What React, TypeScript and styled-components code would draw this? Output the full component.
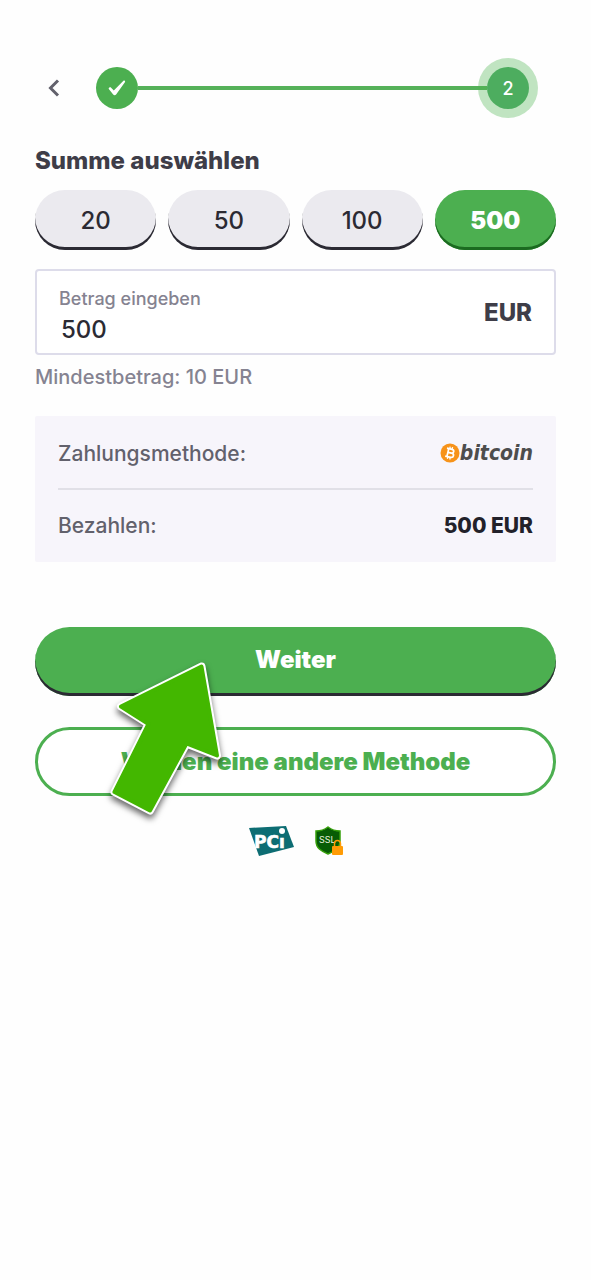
import React, { useState } from "react";
import styled, { createGlobalStyle } from "styled-components";

const GlobalStyle = createGlobalStyle`
  *, *::before, *::after { box-sizing: border-box; }
  body {
    margin: 0;
    background: #fefefe;
    color: #3e3d48;
    font-family: Inter, "Liberation Sans", sans-serif;
  }
  button, input { font-family: inherit; }
`;

const green = "#4caf50";

const Page = styled.main`
  display: flex;
  flex-direction: column;
  padding: 58px 35px 40px;
`;

const Stepper = styled.nav`
  display: flex;
  align-items: center;
  height: 60px;
  padding: 0 27px 0 7px;
`;

const BackButton = styled.button`
  display: flex;
  align-items: center;
  justify-content: center;
  width: 24px;
  height: 32px;
  margin-right: 30px;
  padding: 0;
  border: 0;
  background: none;
  cursor: pointer;
`;

const Step = styled.span<{ $current?: boolean }>`
  display: flex;
  align-items: center;
  justify-content: center;
  flex: none;
  width: 42px;
  height: 42px;
  border-radius: 50%;
  background: ${({ $current }) => ($current ? "#4dad5f" : green)};
  box-shadow: ${({ $current }) => ($current ? "0 0 0 9px rgba(76, 180, 80, 0.35)" : "none")};
  color: #fff;
  font-size: 18px;
  font-weight: 500;
`;

const StepLine = styled.span`
  flex: 1;
  height: 4px;
  background: #55b159;
`;

const Heading = styled.h1`
  margin: 28px 0 14px;
  font-size: 24px;
  line-height: 30px;
  font-weight: 800;
`;

const Amounts = styled.div`
  display: grid;
  grid-template-columns: repeat(4, 1fr);
  gap: 12px;
`;

const AmountButton = styled.button<{ $selected: boolean }>`
  height: 60px;
  padding: 0;
  border: 0;
  border-radius: 30px;
  background: ${({ $selected }) => ($selected ? green : "#ebeaef")};
  box-shadow: inset 0 -3px 0 ${({ $selected }) => ($selected ? "#1b6b20" : "#2b2a33")};
  color: ${({ $selected }) => ($selected ? "#fff" : "#2b2a33")};
  font-size: 24px;
  font-weight: ${({ $selected }) => ($selected ? 900 : 500)};
  cursor: pointer;
`;

const Field = styled.div`
  display: flex;
  align-items: center;
  justify-content: space-between;
  height: 86px;
  margin-top: 19px;
  padding: 0 22px;
  border: 2px solid #dddcea;
  border-radius: 4px;
  background: #fff;
`;

const FieldMain = styled.div`
  display: flex;
  flex: 1;
  flex-direction: column;
  min-width: 0;
  padding-top: 10px;
`;

const FieldLabel = styled.label`
  color: #858391;
  font-size: 18px;
  line-height: 24px;
  font-weight: 500;
`;

const AmountInput = styled.input`
  width: 100%;
  height: 36px;
  padding: 0 2px;
  border: 0;
  outline: 0;
  background: none;
  color: #2b2a33;
  font-size: 24px;
  font-weight: 500;
`;

const Currency = styled.span`
  font-size: 24px;
  font-weight: 800;
`;

const Hint = styled.p`
  margin: 8px 0 0;
  color: #858391;
  font-size: 20px;
  line-height: 28px;
  font-weight: 500;
`;

const Summary = styled.dl`
  margin: 25px 0 0;
  padding: 2px 23px;
  border-radius: 2px;
  background: #f7f5fb;
`;

const SummaryRow = styled.div`
  display: flex;
  align-items: center;
  justify-content: space-between;
  height: 70px;

  & + & {
    height: 72px;
    border-top: 2px solid #e1e0e7;
  }
`;

const Term = styled.dt`
  color: #62616c;
  font-size: 21px;
  font-weight: 500;
`;

const Value = styled.dd`
  display: flex;
  align-items: center;
  margin: 0;
  color: #22212a;
  font-size: 21px;
  font-weight: 800;
`;

const BitcoinName = styled.span`
  color: #4d4d4d;
  font-family: "DejaVu Sans Condensed", "DejaVu Sans", sans-serif;
  font-size: 21px;
  line-height: 26px;
  font-style: italic;
  font-weight: 700;
`;

const Actions = styled.div`
  position: relative;
  display: flex;
  flex-direction: column;
  gap: 31px;
  margin-top: 65px;
`;

const ActionButton = styled.button<{ $outline?: boolean }>`
  height: 69px;
  padding: 0 0 ${({ $outline }) => ($outline ? "0" : "4px")};
  border: ${({ $outline }) => ($outline ? `3px solid ${green}` : "0")};
  border-radius: 35px;
  background: ${({ $outline }) => ($outline ? "#fff" : green)};
  box-shadow: ${({ $outline }) => ($outline ? "none" : "inset 0 -3px 0 #2b2a33")};
  color: ${({ $outline }) => ($outline ? green : "#fff")};
  font-size: 24px;
  font-weight: 900;
  cursor: pointer;
`;

const Pointer = styled.svg`
  position: absolute;
  top: 26px;
  left: 65px;
  pointer-events: none;
  overflow: visible;
  filter: drop-shadow(0 4px 3px rgba(0, 0, 0, 0.6));
`;

const Badges = styled.footer`
  display: flex;
  align-items: center;
  justify-content: center;
  gap: 20px;
  margin-top: 29px;
`;

const presets = ["20", "50", "100", "500"];

export default function App() {
  const [amount, setAmount] = useState("500");

  return (
    <>
      <GlobalStyle />
      <Page>
        <Stepper aria-label="Schritte">
          <BackButton type="button" aria-label="Zurück">
            <svg width="12" height="18" viewBox="0 0 12 18" fill="none" stroke="#62616c" strokeWidth="3">
              <path d="M10 1.5 2.5 9l7.5 7.5" />
            </svg>
          </BackButton>
          <Step>
            <svg width="18" height="16" viewBox="0 0 18 16" fill="#fff">
              <path d="M.8 9c-.6-1 1.300-2.400 2.300-1.300l2.700 2.900L15.200 1c1.200-1.100 2.500 0 1.700 1.200L8.300 14.300c-.9 1.200-2.500 1.200-3.300 0z" />
            </svg>
          </Step>
          <StepLine />
          <Step $current>2</Step>
        </Stepper>

        <Heading>Summe auswählen</Heading>
        <Amounts>
          {presets.map((value) => (
            <AmountButton
              key={value}
              type="button"
              $selected={amount === value}
              aria-pressed={amount === value}
              onClick={() => setAmount(value)}
            >
              {value}
            </AmountButton>
          ))}
        </Amounts>

        <Field>
          <FieldMain>
            <FieldLabel htmlFor="amount">Betrag eingeben</FieldLabel>
            <AmountInput
              id="amount"
              inputMode="decimal"
              value={amount}
              onChange={(event) => setAmount(event.target.value)}
            />
          </FieldMain>
          <Currency>EUR</Currency>
        </Field>
        <Hint>Mindestbetrag: 10 EUR</Hint>

        <Summary>
          <SummaryRow>
            <Term>Zahlungsmethode:</Term>
            <Value>
              <svg width="20" height="20" viewBox="0 0 20 20">
                <circle cx="10" cy="10" r="9.5" fill="#f7931a" />
                <g fill="none" stroke="#fff" strokeWidth="1.7" transform="rotate(13 10 10)">
                  <path d="M6 6h5.2c2.8 0 2.8 3.8 0 3.8H8h3.6c3.2 0 3.2 4.3 0 4.3H6M7.8 6v8.1" />
                  <path d="M8.8 3.7V6m2.4-2.3V6m-2.4 8v2.4M11.2 14v2.4" strokeWidth="1.3" />
                </g>
              </svg>
              <BitcoinName>bitcoin</BitcoinName>
            </Value>
          </SummaryRow>
          <SummaryRow>
            <Term>Bezahlen:</Term>
            <Value>{amount} EUR</Value>
          </SummaryRow>
        </Summary>

        <Actions>
          <ActionButton type="button">Weiter</ActionButton>
          <ActionButton type="button" $outline>
            Wählen eine andere Methode
          </ActionButton>
          <Pointer width="130" height="170" viewBox="100 653 130 170" aria-hidden="true">
            <path
              d="M201.500 666.500 121 706.500 148.500 724 114.500 792 150 810.500 186.500 743.500 217 755.500Z"
              fill="#fff"
              stroke="#fff"
              strokeWidth="8"
              strokeLinejoin="round"
            />
            <path
              d="M201.500 666.500 121 706.500 148.500 724 114.500 792 150 810.500 186.500 743.500 217 755.500Z"
              fill="#43b700"
              stroke="#43b700"
              strokeWidth="4"
              strokeLinejoin="round"
            />
          </Pointer>
        </Actions>

        <Badges>
          <svg width="46" height="32" viewBox="0 0 46 32" role="img" aria-label="PCI">
            <path d="M1 3 38 1 46 22 11 31Z" fill="#0d6d73" />
            <text
              x="6"
              y="23"
              fill="#fff"
              stroke="#fff"
              strokeWidth="0.6"
              fontFamily="DejaVu Sans, sans-serif"
              fontSize="17"
              fontWeight="700"
            >
              PCı
            </text>
            <circle cx="34" cy="6" r="3" fill="#fff" />
          </svg>
          <svg width="30" height="32" viewBox="0 0 30 32" role="img" aria-label="SSL">
            <path
              d="M14 2c4 3 8 4 12 4v10c0 7-5 10-12 13C7 26 2 23 2 16V6c4 0 8-1 12-4z"
              fill="#075c05"
              stroke="#36a00b"
              strokeWidth="1.5"
            />
            <text x="5" y="18" fill="#e6f0df" fontFamily="Inter, sans-serif" fontSize="9">
              SSL
            </text>
            <path d="M20.500 22v-3.500a3 3 0 0 1 6 0V22" fill="none" stroke="#ff9b05" strokeWidth="1.500" />
            <rect x="18" y="21" width="11" height="9" rx="1" fill="#ff9b05" />
          </svg>
        </Badges>
      </Page>
    </>
  );
}
